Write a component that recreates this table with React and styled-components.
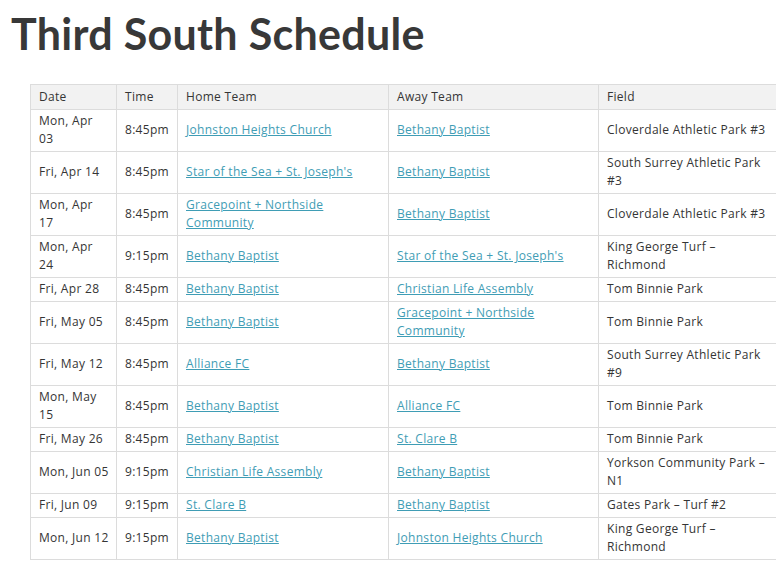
import React from "react";
import styled, { createGlobalStyle } from "styled-components";

const Global = createGlobalStyle`
  html, body {
    margin: 0;
    padding: 0;
    background: #fff;
    overflow: hidden;
  }
`;

const Page = styled.div`
  width: 776px;
  height: 573px;
  overflow: hidden;
  padding: 9px 0 0 11px;
  box-sizing: border-box;
`;

const Title = styled.h1`
  margin: 0;
  font-family: Lato, "Open Sans", sans-serif;
  font-weight: 700;
  font-size: 43px;
  line-height: 50px;
  letter-spacing: 0.3px;
  color: #383838;
`;

const TableWrap = styled.div`
  margin: 25px 0 0 19px;
`;

const Table = styled.table`
  border-collapse: collapse;
  table-layout: fixed;
  width: 748px;
  font-family: "Open Sans", sans-serif;
  font-size: 12px;
  letter-spacing: 0.3px;
  color: #353535;
`;

const Th = styled.th`
  text-align: left;
  font-weight: 400;
  background: #f2f2f2;
  border: 1px solid #dcdcdc;
  padding: 3px 8px 3px;
  line-height: 18px;
`;

const Td = styled.td`
  border: 1px solid #dcdcdc;
  padding: 2px ${(p) => (p.$date ? "6px" : "8px")} 3px 8px;
  line-height: 18px;
  vertical-align: middle;
`;

const Team = styled.a`
  color: #3f9db5;
  text-decoration: underline;
  cursor: pointer;
`;

const rows = [
  ["Mon, Apr 03", "8:45pm", "Johnston Heights Church", "Bethany Baptist", "Cloverdale Athletic Park #3"],
  ["Fri, Apr 14", "8:45pm", "Star of the Sea + St. Joseph's", "Bethany Baptist", "South Surrey Athletic Park #3"],
  ["Mon, Apr 17", "8:45pm", "Gracepoint + Northside Community", "Bethany Baptist", "Cloverdale Athletic Park #3"],
  ["Mon, Apr 24", "9:15pm", "Bethany Baptist", "Star of the Sea + St. Joseph's", "King George Turf – Richmond"],
  ["Fri, Apr 28", "8:45pm", "Bethany Baptist", "Christian Life Assembly", "Tom Binnie Park"],
  ["Fri, May 05", "8:45pm", "Bethany Baptist", "Gracepoint + Northside Community", "Tom Binnie Park"],
  ["Fri, May 12", "8:45pm", "Alliance FC", "Bethany Baptist", "South Surrey Athletic Park #9"],
  ["Mon, May 15", "8:45pm", "Bethany Baptist", "Alliance FC", "Tom Binnie Park"],
  ["Fri, May 26", "8:45pm", "Bethany Baptist", "St. Clare B", "Tom Binnie Park"],
  ["Mon, Jun 05", "9:15pm", "Christian Life Assembly", "Bethany Baptist", "Yorkson Community Park – N1"],
  ["Fri, Jun 09", "9:15pm", "St. Clare B", "Bethany Baptist", "Gates Park – Turf #2"],
  ["Mon, Jun 12", "9:15pm", "Bethany Baptist", "Johnston Heights Church", "King George Turf – Richmond"],
];

export default function App() {
  return (
    <Page>
      <Global />
      <Title>Third South Schedule</Title>
      <TableWrap>
        <Table>
          <colgroup>
            <col style={{ width: 86 }} />
            <col style={{ width: 61 }} />
            <col style={{ width: 211 }} />
            <col style={{ width: 210 }} />
            <col style={{ width: 180 }} />
          </colgroup>
          <thead>
            <tr>
              <Th>Date</Th>
              <Th>Time</Th>
              <Th>Home Team</Th>
              <Th>Away Team</Th>
              <Th>Field</Th>
            </tr>
          </thead>
          <tbody>
            {rows.map((r, i) => (
              <tr key={i}>
                <Td $date>{r[0]}</Td>
                <Td>{r[1]}</Td>
                <Td><Team>{r[2]}</Team></Td>
                <Td><Team>{r[3]}</Team></Td>
                <Td>{r[4]}</Td>
              </tr>
            ))}
          </tbody>
        </Table>
      </TableWrap>
    </Page>
  );
}
